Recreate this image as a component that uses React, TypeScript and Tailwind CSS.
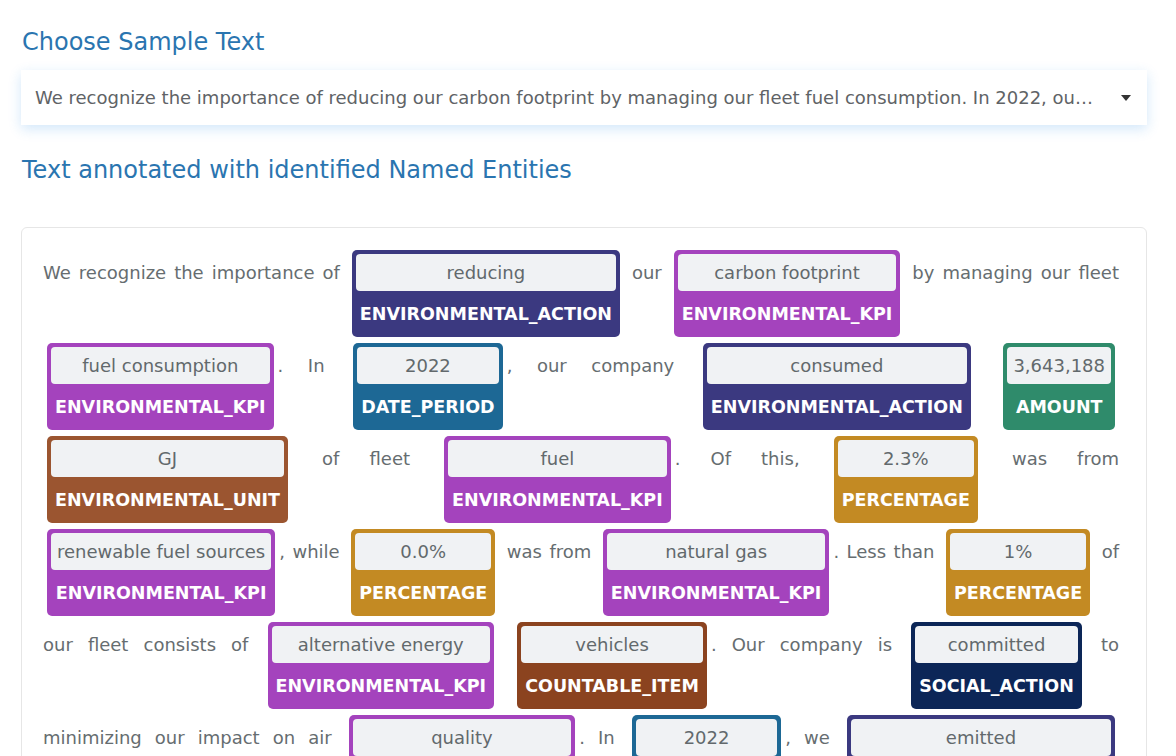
import React from "react";

type Kind =
  | "ENVIRONMENTAL_ACTION"
  | "ENVIRONMENTAL_KPI"
  | "DATE_PERIOD"
  | "AMOUNT"
  | "ENVIRONMENTAL_UNIT"
  | "PERCENTAGE"
  | "COUNTABLE_ITEM"
  | "SOCIAL_ACTION";

const COLORS: Record<Kind, string> = {
  ENVIRONMENTAL_ACTION: "bg-[#3b3980]",
  ENVIRONMENTAL_KPI: "bg-[#a443bd]",
  DATE_PERIOD: "bg-[#1d6895]",
  AMOUNT: "bg-[#2f8b6b]",
  ENVIRONMENTAL_UNIT: "bg-[#9b5530]",
  PERCENTAGE: "bg-[#c38a23]",
  COUNTABLE_ITEM: "bg-[#8b431f]",
  SOCIAL_ACTION: "bg-[#0c2657]",
};

type Seg = string | [string, Kind];

const SEGMENTS: Seg[] = [
  "We recognize the importance of ",
  ["reducing", "ENVIRONMENTAL_ACTION"],
  " our ",
  ["carbon footprint", "ENVIRONMENTAL_KPI"],
  " by managing our fleet ",
  ["fuel consumption", "ENVIRONMENTAL_KPI"],
  ". In ",
  ["2022", "DATE_PERIOD"],
  ", our company ",
  ["consumed", "ENVIRONMENTAL_ACTION"],
  " ",
  ["3,643,188", "AMOUNT"],
  " ",
  ["GJ", "ENVIRONMENTAL_UNIT"],
  " of fleet ",
  ["fuel", "ENVIRONMENTAL_KPI"],
  ". Of this, ",
  ["2.3%", "PERCENTAGE"],
  " was from ",
  ["renewable fuel sources", "ENVIRONMENTAL_KPI"],
  ", while ",
  ["0.0%", "PERCENTAGE"],
  " was from ",
  ["natural gas", "ENVIRONMENTAL_KPI"],
  ". Less than ",
  ["1%", "PERCENTAGE"],
  " of our fleet consists of ",
  ["alternative energy", "ENVIRONMENTAL_KPI"],
  " ",
  ["vehicles", "COUNTABLE_ITEM"],
  ". Our company is ",
  ["committed", "SOCIAL_ACTION"],
  " to minimizing our impact on air ",
  ["quality", "ENVIRONMENTAL_KPI"],
  ". In ",
  ["2022", "DATE_PERIOD"],
  ", we ",
  ["emitted", "ENVIRONMENTAL_ACTION"],
  " ",
  ["25,418", "AMOUNT"],
  " ",
  ["tCO2e", "ENVIRONMENTAL_UNIT"],
  " from our fleet.",
];

const SAMPLE =
  "We recognize the importance of reducing our carbon footprint by managing our fleet fuel consumption. In 2022, our company consumed 3,643,188 GJ of fleet fuel.";

function Entity({ text, kind }: { text: string; kind: Kind }) {
  return (
    <span
      className={`mx-1 my-[3px] inline-flex flex-col rounded-[5px] p-1 text-center ${COLORS[kind]}`}
    >
      <span className="flex h-[37px] items-center justify-center rounded-[4px] bg-[#f0f2f4] px-[6px] text-[#62696c]">
        {text}
      </span>
      <span className="flex h-[42px] items-center justify-center px-1 pt-[5px] text-[17.5px] font-bold text-white">
        {kind}
      </span>
    </span>
  );
}

export default function App() {
  return (
    <div className="min-h-screen bg-white pl-[21px] pr-[29px] pt-[27px] pb-10 font-['DejaVu_Sans',sans-serif] text-[18px] text-[#666d70]">
      <h2 className="pl-px text-[24px] leading-[30px] text-[#2a75b0]">
        Choose Sample Text
      </h2>

      <div className="mt-[13px] flex h-[55px] items-center justify-between gap-6 bg-white pl-[14px] pr-[16px] shadow-[0_4px_12px_rgba(30,136,229,0.2)]">
        <span className="truncate text-[#606366]">{SAMPLE}</span>
        <svg width="10" height="6" viewBox="0 0 10 6" className="shrink-0">
          <path d="M0 0h10L5 6z" fill="#333" />
        </svg>
      </div>

      <h2 className="mt-[30px] pl-px text-[24px] leading-[30px] text-[#2a75b0]">
        Text annotated with identified Named Entities
      </h2>

      <div className="mt-[42px] rounded-[6px] border border-[#e6e6e6] pt-[19px] pb-5 pl-[21px] pr-[27px] text-justify">
        {SEGMENTS.map((s, i) =>
          typeof s === "string" ? (
            <span key={i}>{s}</span>
          ) : (
            <Entity key={i} text={s[0]} kind={s[1]} />
          ),
        )}
      </div>
    </div>
  );
}
